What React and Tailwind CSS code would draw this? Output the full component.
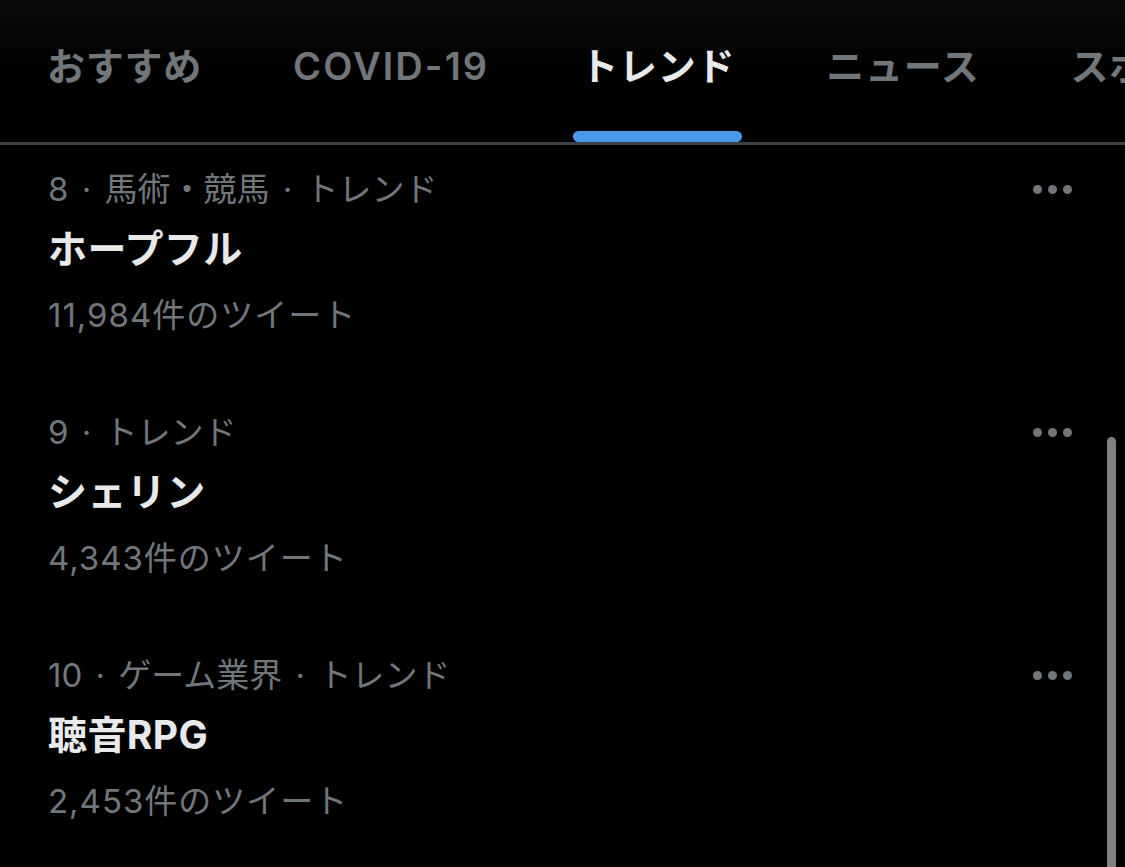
const tabs = [
  { label: "おすすめ", track: "tracking-[0.02em]" },
  { label: "COVID-19", track: "tracking-[0.055em]" },
  { label: "トレンド", track: "tracking-[0.02em]", active: true },
  { label: "ニュース", track: "tracking-[0.02em]" },
  { label: "スポーツ", track: "tracking-[0.02em]" },
];

const trends = [
  { meta: "8 · 馬術・競馬 · トレンド", title: "ホープフル", count: "11,984件のツイート" },
  { meta: "9 · トレンド", title: "シェリン", count: "4,343件のツイート" },
  { meta: "10 · ゲーム業界 · トレンド", title: "聴音RPG", count: "2,453件のツイート" },
];

function MoreDots() {
  return (
    <div className="flex items-center gap-[6px] h-[40px]">
      <span className="w-[9px] h-[9px] rounded-full bg-[#71767b]" />
      <span className="w-[9px] h-[9px] rounded-full bg-[#71767b]" />
      <span className="w-[9px] h-[9px] rounded-full bg-[#71767b]" />
    </div>
  );
}

export default function App() {
  return (
    <div
      className="relative w-[1125px] h-[867px] overflow-hidden bg-black"
      style={{ fontFamily: 'Inter, "Noto Sans CJK JP", sans-serif' }}
    >
      {/* tab bar */}
      <div className="h-[145px] bg-gradient-to-b from-[#0b0b0b] to-black border-b-[3px] border-[#3e4144]">
        <div className="flex h-full pl-[40px] gap-[77px] whitespace-nowrap">
          {tabs.map((t) => (
            <div key={t.label} className="flex flex-col px-[7px] shrink-0">
              <span
                className={
                  "pt-[42px] text-[38px] leading-[48px] font-semibold " +
                  t.track +
                  " " +
                  (t.active ? "text-[#e7e9ea]" : "text-[#71767b]")
                }
              >
                {t.label}
              </span>
              <div className="mt-auto -mx-[7px]">
                {t.active && <div className="h-[11px] rounded-full bg-[#4a9ae8]" />}
              </div>
            </div>
          ))}
        </div>
      </div>

      {/* trends */}
      <div>
        {trends.map((tr) => (
          <div key={tr.title} className="flex justify-between pl-[48px] pr-[53px] pt-[24px] pb-[53px]">
            <div className="flex flex-col">
              <span className="text-[33px] leading-[40px] text-[#71767b] [word-spacing:4px]">{tr.meta}</span>
              <span className="mt-[12px] text-[39px] leading-[56px] font-bold tracking-[0.01em] text-[#e7e9ea]">{tr.title}</span>
              <span className="mt-[18px] text-[33px] leading-[40px] tracking-[0.03em] text-[#71767b]">{tr.count}</span>
            </div>
            <MoreDots />
          </div>
        ))}
      </div>

      {/* scroll indicator */}
      <div className="absolute left-[1107px] top-[437px] w-[9px] h-[450px] rounded-full bg-[#808080]" />
    </div>
  );
}
